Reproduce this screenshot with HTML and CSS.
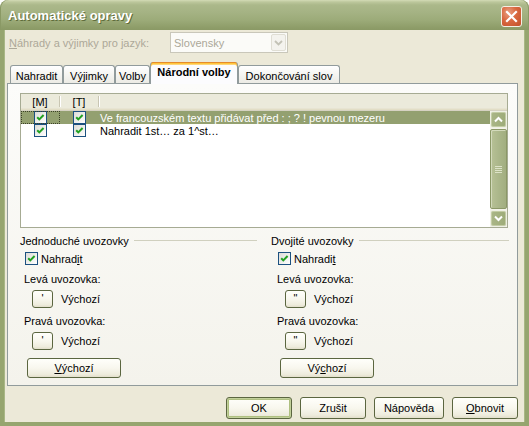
FILE: index.html
```html
<!DOCTYPE html>
<html lang="cs">
<head>
<meta charset="utf-8">
<title>Automatické opravy</title>
<link rel="stylesheet" href="styles.css">
</head>
<body>
<div class="window">
  <div class="titlebar">
    <span class="title">Automatické opravy</span>
    <span class="close"><svg width="13" height="13" viewBox="0 0 13 13"><path d="M2 2 L11 11 M11 2 L2 11" stroke="#fff" stroke-width="2.2" stroke-linecap="square"/></svg></span>
  </div>
  <div class="client">
    <div class="langrow">
      <span class="lang-label"><u>N</u>áhrady a výjimky pro jazyk:</span>
      <div class="combo">
        <span class="combo-text">Slovensky</span>
        <span class="combo-btn"><svg width="9" height="6" viewBox="0 0 9 6"><path d="M1 1 L4.5 4.5 L8 1" fill="none" stroke="#c3c2b6" stroke-width="1.8"/></svg></span>
      </div>
    </div>
    <div class="tabs">
      <div class="tab t1">Nahradit</div>
      <div class="tab t2">Výjimky</div>
      <div class="tab t3">Volby</div>
      <div class="tab t4 active">Národní volby</div>
      <div class="tab t5">Dokončování slov</div>
    </div>
    <div class="panel">
      <div class="list">
        <div class="list-header">
          <div class="hcol c1">[M]</div>
          <div class="hcol c2">[T]</div>
          <div class="hcol c3"></div>
        </div>
        <div class="list-body">
          <div class="rows">
            <div class="row selected">
              <div class="cell c1 focus"><span class="cb"><svg width="11" height="11" viewBox="0 0 11 11"><path d="M2.2 5.2 L4.3 7.4 L8.6 3" fill="none" stroke="#21a121" stroke-width="2"/></svg></span></div>
              <div class="cell c2"><span class="cb"><svg width="11" height="11" viewBox="0 0 11 11"><path d="M2.2 5.2 L4.3 7.4 L8.6 3" fill="none" stroke="#21a121" stroke-width="2"/></svg></span></div>
              <div class="cell c3">Ve francouzském textu přidávat před : ; ? ! pevnou mezeru</div>
            </div>
            <div class="row">
              <div class="cell c1"><span class="cb"><svg width="11" height="11" viewBox="0 0 11 11"><path d="M2.2 5.2 L4.3 7.4 L8.6 3" fill="none" stroke="#21a121" stroke-width="2"/></svg></span></div>
              <div class="cell c2"><span class="cb"><svg width="11" height="11" viewBox="0 0 11 11"><path d="M2.2 5.2 L4.3 7.4 L8.6 3" fill="none" stroke="#21a121" stroke-width="2"/></svg></span></div>
              <div class="cell c3">Nahradit 1st… za 1^st…</div>
            </div>
          </div>
          <div class="vscroll">
            <div class="sb-btn"><svg width="9" height="7" viewBox="0 0 9 7"><path d="M1 5.5 L4.5 2 L8 5.5" fill="none" stroke="#fff" stroke-width="2"/></svg></div>
            <div class="sb-thumb"><span class="grip"></span></div>
            <div class="sb-btn"><svg width="9" height="7" viewBox="0 0 9 7"><path d="M1 1.5 L4.5 5 L8 1.5" fill="none" stroke="#fff" stroke-width="2"/></svg></div>
          </div>
        </div>
      </div>
      <div class="groups">
        <div class="group">
          <div class="gtitle">Jednoduché uvozovky</div>
          <div class="items">
            <div class="chk-row"><span class="cb"><svg width="11" height="11" viewBox="0 0 11 11"><path d="M2.2 5.2 L4.3 7.4 L8.6 3" fill="none" stroke="#21a121" stroke-width="2"/></svg></span><span>Nahrad<u>i</u>t</span></div>
            <div class="field-label">Levá uvozovka:</div>
            <div class="quote-row"><span class="btn quote">'</span><span>Výchozí</span></div>
            <div class="field-label second">Pravá uvozovka:</div>
            <div class="quote-row"><span class="btn quote">'</span><span>Výchozí</span></div>
            <div class="btn big"><u>V</u>ýchozí</div>
          </div>
        </div>
        <div class="group right">
          <div class="gtitle">Dvojité uvozovky</div>
          <div class="items">
            <div class="chk-row"><span class="cb"><svg width="11" height="11" viewBox="0 0 11 11"><path d="M2.2 5.2 L4.3 7.4 L8.6 3" fill="none" stroke="#21a121" stroke-width="2"/></svg></span><span>Nahradi<u>t</u></span></div>
            <div class="field-label">Levá uvozovka:</div>
            <div class="quote-row"><span class="btn quote">"</span><span>Výchozí</span></div>
            <div class="field-label second">Pravá uvozovka:</div>
            <div class="quote-row"><span class="btn quote">"</span><span>Výchozí</span></div>
            <div class="btn big">Vý<u>c</u>hozí</div>
          </div>
        </div>
      </div>
    </div>
    <div class="buttons">
      <span class="btn dlg default">OK</span>
      <span class="btn dlg">Zrušit</span>
      <span class="btn dlg wide">Nápověda</span>
      <span class="btn dlg"><u>O</u>bnovit</span>
    </div>
  </div>
</div>
</body>
</html>
```
FILE: styles.css
```css
html, body {
  margin: 0;
  padding: 0;
  background: #ffffff;
}
body {
  font-family: "Liberation Sans", Arial, sans-serif;
  font-size: 11px;
  color: #000;
}
u { text-decoration: underline; text-underline-offset: 1px; }

.window {
  width: 529px;
  height: 426px;
  display: flex;
  flex-direction: column;
}

/* title bar */
.titlebar {
  height: 30px;
  flex: none;
  box-sizing: border-box;
  border-radius: 8px 8px 0 0;
  background: linear-gradient(to bottom, #d3dbb6 0, #bcc79c 2px, #abb88a 5px, #a5b384 12px, #9cab79 20px, #8f9e6a 27px, #8a9965 30px);
  box-shadow: inset 1px 0 #8a9965, inset -1px 0 #8a9965;
  display: flex;
  align-items: center;
  padding: 0 7px 0 8px;
}
.title {
  color: #fff;
  font-weight: bold;
  font-size: 13px;
  text-shadow: 1px 1px 0 #5f6c3b;
  margin-top: 1px;
}
.close {
  margin-left: auto;
  width: 21px;
  height: 21px;
  box-sizing: border-box;
  border: 1px solid #f4efe4;
  border-radius: 3px;
  background: radial-gradient(ellipse at 35% 30%, #e8a083 0, #d9683f 45%, #c2502a 100%);
  display: flex;
  align-items: center;
  justify-content: center;
  margin-top: 2px;
}

/* client area */
.client {
  flex: 1;
  box-sizing: border-box;
  background: #ece9d8;
  border: 4px solid #96a56f;
  border-top: 0;
  box-shadow: inset 1px 0 #a9b786, inset -1px 0 #a9b786;
  padding: 2px 7px 0 3px;
  display: flex;
  flex-direction: column;
}

.langrow {
  display: flex;
  align-items: center;
  height: 21px;
  padding-left: 2px;
}
.lang-label {
  width: 161px;
  color: #aca899;
}
.combo {
  width: 118px;
  height: 21px;
  box-sizing: border-box;
  border: 1px solid #c9c7ba;
  background: #fbfbf8;
  display: flex;
  align-items: center;
  padding: 0 1px 0 3px;
}
.combo-text {
  color: #aca899;
  flex: 1;
}
.combo-btn {
  width: 15px;
  height: 17px;
  box-sizing: border-box;
  border: 1px solid #e0ded4;
  border-radius: 2px;
  background: #f4f3ee;
  display: flex;
  align-items: center;
  justify-content: center;
}

/* tabs */
.tabs {
  display: flex;
  align-items: flex-end;
  height: 21px;
  margin-top: 9px;
  padding-left: 3px;
  position: relative;
  z-index: 1;
}
.tab {
  height: 18px;
  box-sizing: border-box;
  border: 1px solid #919b9c;
  border-bottom: 0;
  border-radius: 3px 3px 0 0;
  background: linear-gradient(to bottom, #ffffff, #f3f3ef 60%, #ecebe5);
  display: flex;
  align-items: center;
  justify-content: center;
  padding-top: 2px;
}
.t1 { width: 53px; }
.t2 { width: 52px; }
.t3 { width: 35px; }
.t4 { width: 88px; }
.t5 { width: 102px; }
.tab.active {
  height: 22px;
  margin-bottom: -1px;
  font-weight: bold;
  background: #fcfcfe;
  border-top: 0;
  box-shadow: inset 0 1px #e68b2c, inset 0 2px #ffc73c, inset 0 3px #ffd67b;
  padding-top: 0;
  padding-bottom: 2px;
}

/* panel */
.panel {
  height: 303px;
  box-sizing: border-box;
  border: 1px solid #919b9c;
  background: linear-gradient(to bottom, #fcfcfa, #f4f3ec);
  padding: 9px 0 0 12px;
}

.list {
  width: 488px;
  height: 135px;
  box-sizing: border-box;
  border: 1px solid #a6ab93;
  background: #fff;
  display: flex;
  flex-direction: column;
}
.list-header {
  height: 17px;
  flex: none;
  box-sizing: border-box;
  display: flex;
  background: #ebeadb;
  border-bottom: 1px solid #d6d2c2;
  box-shadow: inset 0 -1px #e2dec6, inset 0 -2px #e7e4d2;
}
.hcol {
  display: flex;
  align-items: center;
  justify-content: center;
  box-sizing: border-box;
  padding-bottom: 1px;
}
.hcol.c1, .hcol.c2 {
  width: 39px;
  border-right: 1px solid #c9c6b3;
  margin: 2px 0 3px;
  box-shadow: 1px 0 #fff;
  padding-bottom: 0;
}
.hcol.c3 { flex: 1; }

.list-body {
  flex: 1;
  display: flex;
}
.rows { flex: 1; }
.row {
  height: 13px;
  display: flex;
  align-items: center;
}
.row.selected {
  background: #93a070;
  color: #fff;
}
.cell.c1, .cell.c2 {
  width: 39px;
  height: 13px;
  display: flex;
  align-items: center;
  justify-content: center;
  box-sizing: border-box;
}
.cell.focus {
  outline: 1px dotted #3c4128;
  outline-offset: -1px;
}
.cell.c3 {
  flex: 1;
  padding-left: 1px;
  white-space: nowrap;
}

.cb {
  width: 13px;
  height: 13px;
  flex: none;
  box-sizing: border-box;
  border: 1px solid #1c5180;
  background: linear-gradient(135deg, #dcdcd7, #ffffff);
  display: flex;
  align-items: center;
  justify-content: center;
}

/* scrollbar */
.vscroll {
  width: 17px;
  display: flex;
  flex-direction: column;
  background: #f4f3ea;
}
.sb-btn {
  height: 17px;
  box-sizing: border-box;
  border: 1px solid #eef0e4;
  border-radius: 3px;
  background: linear-gradient(to right, #aab687, #9dab78);
  box-shadow: inset 0 0 0 1px #c3cca4;
  display: flex;
  align-items: center;
  justify-content: center;
}
.sb-thumb {
  flex: 1;
  margin: 1px 0;
  box-sizing: border-box;
  border: 1px solid #8b9867;
  border-radius: 2px;
  background: linear-gradient(to right, #b7c196, #a9b588 60%, #a2ae80);
  box-shadow: inset 1px 1px #d3dabb;
  display: flex;
  align-items: center;
  justify-content: center;
}
.grip {
  width: 7px;
  height: 7px;
  background: repeating-linear-gradient(to bottom, #dde3c8 0, #dde3c8 1px, transparent 1px, transparent 2px);
}

/* groups */
.groups {
  display: grid;
  grid-template-columns: 237px 238px;
  column-gap: 14px;
  margin-top: 6px;
}
.gtitle {
  display: flex;
  align-items: center;
  height: 13px;
  white-space: nowrap;
}
.gtitle::after {
  content: "";
  flex: 1;
  border-top: 1px solid #d0d0bf;
  margin-left: 5px;
}
.items {
  display: flex;
  flex-direction: column;
  align-items: flex-start;
}
.group.right .items { padding-left: 2px; }
.chk-row {
  display: flex;
  align-items: center;
  gap: 3px;
  height: 13px;
  margin: 5px 0 0 5px;
}
.field-label {
  line-height: 13px;
  margin: 8px 0 0 4px;
}
.field-label.second { margin-top: 7px; }
.quote-row {
  display: flex;
  align-items: center;
  gap: 8px;
  margin: 4px 0 0 12px;
}

/* buttons */
.btn {
  box-sizing: border-box;
  border: 1px solid #5b6640;
  border-radius: 3px;
  background: linear-gradient(to bottom, #fffffb 0, #f8f7ee 50%, #eeecdd 85%, #e2dfcb 100%);
  display: flex;
  align-items: center;
  justify-content: center;
}
.btn.quote {
  width: 21px;
  height: 18px;
  padding-bottom: 2px;
}
.btn.big {
  width: 94px;
  height: 20px;
  margin: 8px 0 0 7px;
}
.buttons {
  display: flex;
  justify-content: flex-end;
  gap: 8px;
  margin-top: 11px;
}
.btn.dlg {
  width: 66px;
  height: 22px;
}
.btn.dlg.wide { width: 70px; }
.btn.default {
  box-shadow: inset 0 0 0 1px #c2d09a, inset 0 0 0 2px #aebf80;
}
```
